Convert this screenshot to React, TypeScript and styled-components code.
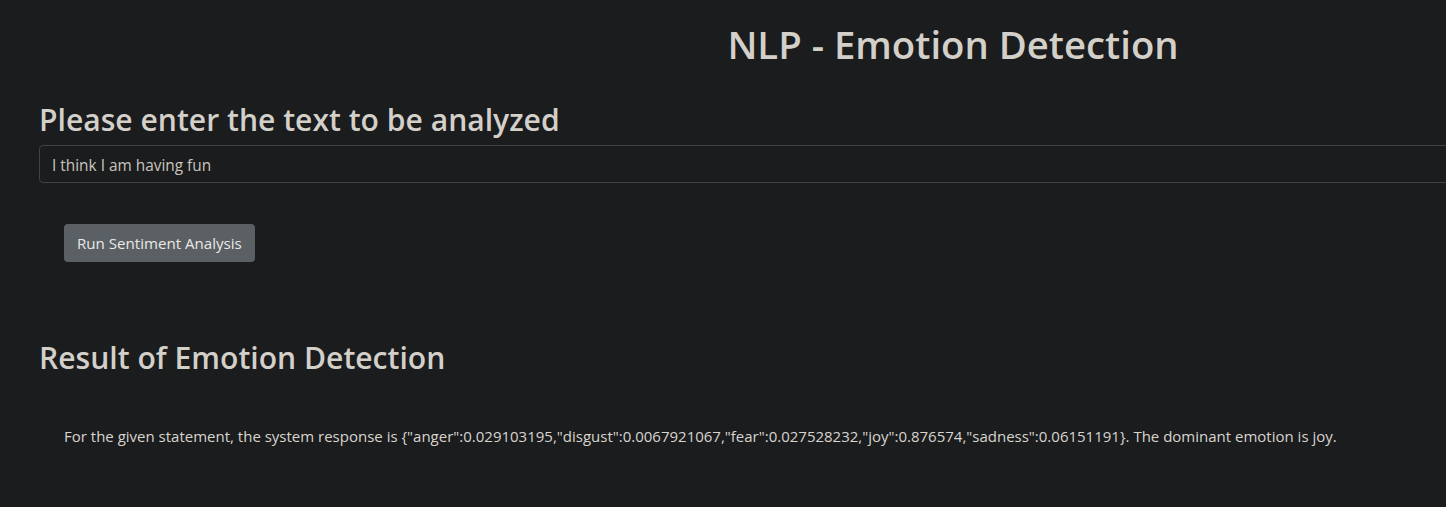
import React from "react";
import styled, { createGlobalStyle } from "styled-components";

const Global = createGlobalStyle`
  html, body { margin: 0; padding: 0; background: #1b1c1e; overflow: hidden; }
  body { font-family: "Open Sans", "Noto Sans", sans-serif; color: #d3cfc9; }
`;

const Page = styled.div`
  width: 1906px;
  box-sizing: border-box;
  padding: 20px 0 0 39px;
  display: flex;
  flex-direction: column;
`;

const Title = styled.h1`
  margin: 0;
  font-size: 38.3px;
  font-weight: 600;
  line-height: 48px;
  text-align: center;
  padding-right: 39px;
`;

const Heading = styled.h2<{ $top: number }>`
  margin: ${(p) => p.$top}px 0 0 0;
  font-size: 30.1px;
  font-weight: 600;
  line-height: 38px;
`;

const Input = styled.input`
  margin-top: 6px;
  height: 38px;
  box-sizing: border-box;
  width: 1828px;
  background: #1b1c1e;
  border: 1px solid #3f4346;
  border-radius: 4px;
  padding: 2px 12px 0;
  color: #c9c5be;
  font-family: inherit;
  font-size: 15.4px;
  outline: none;
`;

const Actions = styled.div`
  display: flex;
  padding: 41px 0 0 25px;
`;

const Button = styled.button`
  height: 38px;
  padding: 0 13px;
  background: #5a6064;
  border: none;
  border-radius: 4px;
  color: #ebe8e4;
  font-family: inherit;
  font-size: 15.1px;
`;

const Result = styled.p`
  margin: 49px 0 0 25px;
  font-size: 15px;
  line-height: 20px;
  color: #d8d4ce;
  white-space: nowrap;
`;

export default function App() {
  return (
    <>
      <Global />
      <Page>
        <Title>NLP - Emotion Detection</Title>
        <Heading $top={33}>Please enter the text to be analyzed</Heading>
        <Input defaultValue="I think I am having fun" />
        <Actions>
          <Button>Run Sentiment Analysis</Button>
        </Actions>
        <Heading $top={77}>Result of Emotion Detection</Heading>
        <Result>
          For the given statement, the system response is {"{"}"anger":0.029103195,"disgust":0.0067921067,"fear":0.027528232,"joy":0.876574,"sadness":0.06151191{"}"}. The dominant emotion is joy.
        </Result>
      </Page>
    </>
  );
}
